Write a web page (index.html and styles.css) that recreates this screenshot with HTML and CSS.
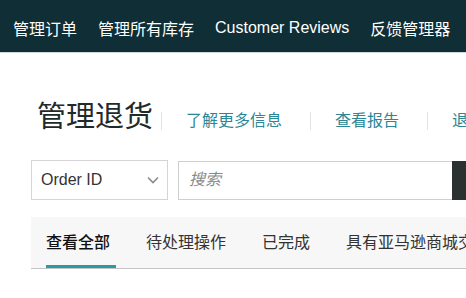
FILE: index.html
```html
<!DOCTYPE html>
<html lang="zh-CN">
<head>
  <meta charset="UTF-8">
  <meta name="viewport" content="width=device-width, initial-scale=1.0">
  <title>管理退货</title>
  <link rel="stylesheet" href="styles.css">
</head>
<body>
  <nav class="topnav">
    <a href="#">管理订单</a>
    <a href="#">管理所有库存</a>
    <a href="#">Customer Reviews</a>
    <a href="#">反馈管理器</a>
  </nav>

  <div class="page">
    <div class="title-row">
      <h1>管理退货</h1>
      <a class="title-link" href="#">了解更多信息</a>
      <a class="title-link" href="#">查看报告</a>
      <a class="title-link" href="#">退货设置</a>
    </div>

    <div class="search-row">
      <div class="select">
        <span>Order ID</span>
        <svg class="chevron" width="12" height="8" viewBox="0 0 12 8">
          <polyline points="1,1.5 6,6.5 11,1.5" fill="none" stroke="#8a8a8a" stroke-width="1.6"/>
        </svg>
      </div>
      <input class="search" type="text" placeholder="搜索">
      <button class="search-btn">搜索</button>
    </div>

    <div class="tabs">
      <a class="tab active" href="#">查看全部</a>
      <a class="tab" href="#">待处理操作</a>
      <a class="tab" href="#">已完成</a>
      <a class="tab" href="#">具有亚马逊商城交易保障索赔</a>
    </div>
  </div>
</body>
</html>
```

FILE: styles.css
```css
html, body {
  margin: 0;
  padding: 0;
  background: #fff;
  overflow: hidden;
  font-family: "Liberation Sans", "Noto Sans CJK SC", sans-serif;
}
a {
  text-decoration: none;
}
.topnav {
  display: flex;
  align-items: center;
  gap: 21px;
  box-sizing: border-box;
  height: 53px;
  padding: 3px 0 0 13px;
  background-color: #0f2e35; /* dark teal bar */
  border-bottom: 1px solid #cfd9db;
  white-space: nowrap;
}
.topnav a {
  color: #fff;
  font-size: 16px;
}
.page {
  padding-left: 31px;
  white-space: nowrap;
}
.title-row {
  display: flex;
  align-items: flex-end;
  margin-top: 44px;
  height: 40px;
}
.title-row h1 {
  margin: 0 8px 0 6px;
  font-size: 29px;
  font-weight: normal;
  line-height: 40px;
  color: #1f2b2b;
}
.title-link {
  display: block;
  margin-bottom: 7px;
  padding: 0 28px 0 24px;
  line-height: 18px;
  font-size: 16px;
  color: #2b8796;
  border-left: 1px solid #e2e4e4;
}
.search-row {
  display: flex;
  align-items: center;
  margin-top: 23px;
}
.select {
  flex: none;
  display: flex;
  align-items: center;
  justify-content: space-between;
  box-sizing: border-box;
  width: 137px;
  height: 40px;
  padding: 0 8px 0 9px;
  border: 1px solid #d5d5d5;
  font-size: 16px;
  color: #333;
}
.search {
  flex: none;
  box-sizing: border-box;
  width: 274px;
  height: 39px;
  margin-left: 10px;
  padding: 0 10px;
  border: 1px solid #cfcfcf;
  border-right: none;
  font-family: inherit;
  font-size: 16px;
  outline: none;
}
.search::placeholder {
  color: #8a8a8a;
  font-style: italic;
}
.search-btn {
  flex: none;
  width: 72px;
  height: 39px;
  border: none;
  background-color: #2b3031;
  color: #fff;
  font-size: 16px;
}
.tabs {
  display: flex;
  align-items: flex-end;
  gap: 30px;
  height: 51px;
  margin-top: 17px;
  padding-left: 15px;
  background-color: #f7f7f7;
  border-bottom: 1px solid #c4c4c4;
}
.tab {
  display: block;
  padding: 0 6px 12px 0;
  font-size: 16px;
  line-height: 20px;
  color: #333;
  border-bottom: 3px solid transparent;
}
.tab.active {
  color: #111;
  font-weight: 500;
  border-bottom-color: #2a9ba5;
}
```
